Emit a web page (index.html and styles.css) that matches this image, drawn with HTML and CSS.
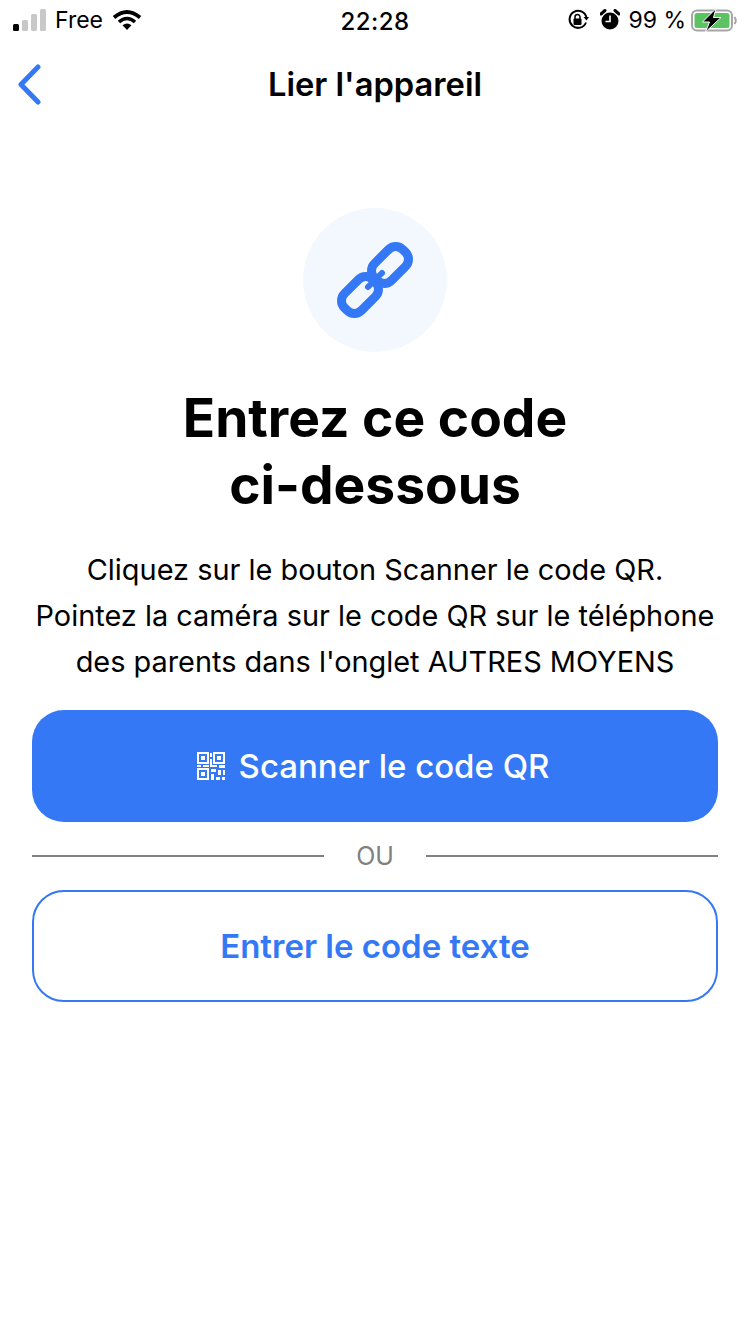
FILE: index.html
```html
<!DOCTYPE html>
<html lang="fr">
<head>
    <meta charset="UTF-8">
    <meta name="viewport" content="width=device-width, initial-scale=1.0">
    <title>Lier l'appareil</title>
    <link rel="stylesheet" href="styles.css">
</head>
<body>
    <div class="status-bar">
        <div class="status-left">
            <svg class="signal" width="34" height="22" viewBox="0 0 34 22">
                <rect x="0" y="15" width="6" height="7" rx="1.5" fill="#000"/>
                <rect x="9" y="11" width="6" height="11" rx="1.5" fill="#c8c8c8"/>
                <rect x="18" y="5" width="6" height="17" rx="1.5" fill="#c8c8c8"/>
                <rect x="27" y="0" width="6" height="22" rx="1.5" fill="#c8c8c8"/>
            </svg>
            <span>Free</span>
            <svg class="wifi" width="30" height="22" viewBox="0 0 30 22">
                <path d="M2 8.500 Q15 -2.500 28 8.500" fill="none" stroke="#000" stroke-width="3.800"/>
                <path d="M7 13 Q15 6 23 13" fill="none" stroke="#000" stroke-width="3.600"/>
                <path d="M10.500 16.200 Q15 12.800 19.500 16.200 L15 21 Z" fill="#000"/>
            </svg>
        </div>
        <div class="status-time">22:28</div>
        <div class="status-right">
            <svg class="lock" width="22" height="22" viewBox="0 0 22 22">
                <path d="M19 13.500 A8.500 8.500 0 1 1 19.500 9" fill="none" stroke="#000" stroke-width="2"/>
                <path d="M16.500 8 L22 8 L19.500 11.500 Z" fill="#000"/>
                <rect x="6.500" y="9.500" width="8" height="6.500" rx="1" fill="#000"/>
                <path d="M8 10 V8 A2.500 2.500 0 0 1 13 8 V10" fill="none" stroke="#000" stroke-width="1.500"/>
            </svg>
            <svg class="alarm" width="20" height="22" viewBox="0 0 20 22">
                <circle cx="10" cy="12" r="8.500" fill="#000"/>
                <path d="M1 5 L5 1.500 M19 5 L15 1.500" stroke="#000" stroke-width="3" stroke-linecap="round"/>
                <path d="M10 6.500 V12.500 H5.500" fill="none" stroke="#fff" stroke-width="1.600"/>
            </svg>
            <span class="battery-text">99 %</span>
            <svg class="battery" width="46" height="24" viewBox="0 0 46 24">
                <rect x="1" y="2.500" width="40" height="20" rx="5" fill="none" stroke="#a6a6a6" stroke-width="2"/>
                <rect x="3.500" y="5" width="35" height="15" rx="2.500" fill="#5cc363"/>
                <path d="M43.500 9 Q46 12.500 43.500 16" fill="none" stroke="#a6a6a6" stroke-width="2"/>
                <path d="M25 0.500 L11.500 14 H18.500 L14.500 24 L30 9.500 H22.500 Z" fill="#000" stroke="#fff" stroke-width="1"/>
            </svg>
        </div>
    </div>

    <header class="nav">
        <a class="back" href="#" aria-label="Retour">
            <svg width="26" height="42" viewBox="0 0 26 42">
                <path d="M21 3 L4 20.500 L21 38" fill="none" stroke="#3478f6" stroke-width="5" stroke-linecap="round" stroke-linejoin="round"/>
            </svg>
        </a>
        <h2 class="nav-title">Lier l'appareil</h2>
    </header>

    <main class="content">
        <div class="link-circle">
            <svg width="84" height="84" viewBox="-42 -42 84 84">
                <g fill="none" stroke="#3478f6" stroke-width="9">
                    <rect x="-5" y="-27" width="40" height="24" rx="10" transform="rotate(-45 15 -15)"/>
                    <rect x="-35" y="3" width="40" height="24" rx="10" transform="rotate(-45 -15 15)"/>
                </g>
                <path d="M-7 7 L7 -7" stroke="#3478f6" stroke-width="6" stroke-linecap="round"/>
            </svg>
        </div>
        <h1 class="title">Entrez ce code<br>ci-dessous</h1>
        <p class="desc">Cliquez sur le bouton Scanner le code QR.<br>Pointez la caméra sur le code QR sur le téléphone<br>des parents dans l'onglet AUTRES MOYENS</p>
        <button class="btn btn-primary">
            <svg width="28" height="28" viewBox="0 0 28 28" fill="#fff">
                <path fill-rule="evenodd" d="M0 0H12V12H0ZM2 2V10H10V2Z"/>
                <rect x="4" y="4" width="4" height="4"/>
                <path fill-rule="evenodd" d="M16 0H28V12H16ZM18 2V10H26V2Z"/>
                <rect x="20" y="4" width="4" height="4"/>
                <path fill-rule="evenodd" d="M0 16H12V28H0ZM2 18V26H10V18Z"/>
                <rect x="4" y="20" width="4" height="4"/>
                <rect x="0" y="13" width="4" height="2"/>
                <rect x="6" y="13" width="6" height="2"/>
                <rect x="13" y="1" width="2" height="4"/>
                <rect x="13" y="7" width="2" height="8"/>
                <rect x="15" y="13" width="5" height="2"/>
                <rect x="22" y="13" width="6" height="3"/>
                <rect x="14" y="17" width="5" height="3"/>
                <rect x="21" y="18" width="3" height="5"/>
                <rect x="26" y="18" width="2" height="5"/>
                <rect x="14" y="22" width="3" height="6"/>
                <rect x="19" y="25" width="4" height="3"/>
                <rect x="25" y="25" width="3" height="3"/>
            </svg>
            Scanner le code QR
        </button>
        <div class="divider"><span>OU</span></div>
        <button class="btn btn-outline">Entrer le code texte</button>
    </main>
</body>
</html>
```

FILE: styles.css
```css
* {
    box-sizing: border-box;
}
body {
    margin: 0;
    background-color: #fff;
    color: #000;
    font-family: Inter, "Liberation Sans", sans-serif;
}
.status-bar {
    height: 40px;
    display: grid;
    grid-template-columns: 1fr auto 1fr;
    align-items: center;
    padding: 0 13px 0 13px;
    font-size: 23px;
}
.status-left {
    display: flex;
    align-items: center;
    gap: 8px;
}
.status-left .wifi {
    margin-left: 1px;
}
.status-time {
    font-size: 24px;
    font-weight: 500;
    letter-spacing: 0.5px;
    padding-top: 2px;
}
.status-right {
    display: flex;
    align-items: center;
    justify-content: flex-end;
    gap: 8px;
}
.status-right .lock {
    margin-right: 3px;
}
.status-right .battery {
    margin-left: -3px;
}
.nav {
    height: 90px;
    padding-bottom: 3px;
    display: flex;
    align-items: center;
    justify-content: center;
    position: relative;
}
.back {
    position: absolute;
    left: 17px;
    top: 24px;
    display: block;
    line-height: 0;
}
.nav-title {
    margin: 0;
    font-size: 32.7px;
    font-weight: 600;
}
.content {
    padding: 78px 32px 0;
    display: flex;
    flex-direction: column;
    align-items: center;
}
.link-circle {
    width: 144px;
    height: 144px;
    border-radius: 50%;
    background-color: #f3f8fe;
    display: flex;
    align-items: center;
    justify-content: center;
}
.title {
    margin: 32px 0 0;
    font-size: 53.3px;
    line-height: 67px;
    font-weight: 700;
    text-align: center;
}
.desc {
    margin: 29px -10px 0;
    font-size: 28.9px;
    line-height: 46px;
    text-align: center;
}
.btn {
    width: 100%;
    height: 112px;
    border-radius: 32px;
    font-family: inherit;
    font-size: 33px;
    font-weight: 500;
    cursor: pointer;
    display: flex;
    align-items: center;
    justify-content: center;
    gap: 14px;
}
.btn-primary {
    margin-top: 25px;
    padding-right: 10px;
    background-color: #3478f6;
    color: #fff;
    border: none;
}
.btn-outline {
    background-color: #fff;
    color: #3478f6;
    border: 2px solid #3478f6;
    font-weight: 600;
}
.divider {
    width: 100%;
    height: 68px;
    display: flex;
    align-items: center;
    gap: 32px;
    color: #808080;
    font-size: 25px;
}
.divider::before,
.divider::after {
    content: "";
    flex: 1;
    height: 2px;
    background-color: #808080;
}
```
